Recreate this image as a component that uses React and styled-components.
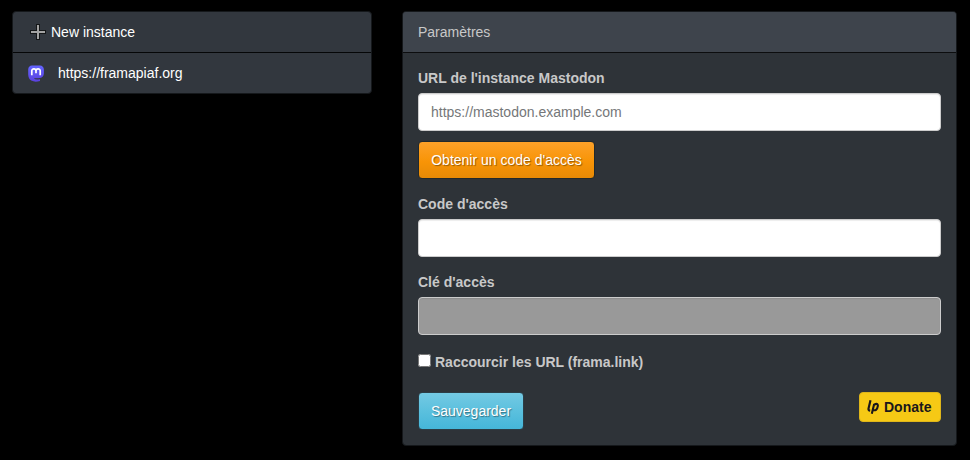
import React from "react";
import styled, { createGlobalStyle, css } from "styled-components";

const Global = createGlobalStyle`
  *, *::before, *::after { box-sizing: border-box; }
  body {
    margin: 0;
    background: #000;
    color: #c8c8c8;
    font: 14px/20px "Liberation Sans", Arial, sans-serif;
  }
`;

const Page = styled.main`
  display: grid;
  grid-template-columns: 360px 555px;
  column-gap: 30px;
  align-items: start;
  height: 460px;
  padding: 11px 13px 0 12px;
  overflow: hidden;
`;

const InstanceList = styled.ul`
  margin: 0;
  padding: 0;
  list-style: none;
  border: 1px solid #15181b;
  border-radius: 4px;
  background: #32373e;
  overflow: hidden;
`;

const InstanceItem = styled.li`
  display: flex;
  align-items: center;
  gap: ${(p) => p.$gap}px;
  height: 40px;
  padding-left: ${(p) => p.$indent}px;
  color: #fff;

  & + & {
    height: 41px;
    border-top: 1px solid #050607;
  }

  svg { flex: none; }
`;

const Panel = styled.section`
  height: 435px;
  border: 1px solid #15181b;
  border-radius: 4px;
  background: #2e3338;
  overflow: hidden;
`;

const PanelHeading = styled.header`
  height: 41px;
  padding: 10px 15px;
  border-bottom: 1px solid #0c0d0e;
  background: #3e444c;
`;

const Form = styled.form`
  padding: 15px 15px 0;
`;

const Field = styled.div`
  margin-bottom: 15px;
`;

const Label = styled.label`
  display: block;
  margin-bottom: 5px;
  font-weight: bold;
`;

const Input = styled.input`
  display: block;
  width: 100%;
  height: 38px;
  padding: 8px 12px;
  border: 1px solid #ccc;
  border-radius: 4px;
  background: #fff;
  color: #272b30;
  font: inherit;
  box-shadow: inset 0 1px 1px rgba(0, 0, 0, 0.075);

  &::placeholder { color: #757779; opacity: 1; }
  &:disabled { background: #999; }
`;

const variants = {
  warning: css`
    background: linear-gradient(#fda129, #f89406 55%, #e78a06);
    border-color: #22292b;
  `,
  info: css`
    background: linear-gradient(#74cae3, #5bc0de 50%, #45b6d9);
    border-color: #2c3d45;
  `,
};

const Button = styled.button`
  display: block;
  width: ${(p) => p.$width}px;
  height: 38px;
  margin-top: ${(p) => p.$top || 0}px;
  padding: 0;
  border: 1px solid;
  border-radius: 4px;
  color: #fff;
  font: inherit;
  text-shadow: 1px 1px 1px rgba(0, 0, 0, 0.4);
  ${(p) => variants[p.$variant]}
`;

const CheckLabel = styled.label`
  display: flex;
  align-items: center;
  gap: 4px;
  height: 20px;
  margin-top: 17px;
  font-weight: bold;
`;

const Checkbox = styled.input`
  width: 13px;
  height: 13px;
  margin: 0 0 3px;
`;

const Actions = styled.div`
  display: flex;
  justify-content: space-between;
  align-items: flex-start;
  margin-top: 20px;
`;

const Donate = styled.button`
  display: flex;
  align-items: center;
  gap: 5px;
  width: 82px;
  height: 30px;
  padding: 0 0 0 7px;
  border: 1px solid #dfb61a;
  border-radius: 4px;
  background: #f6c915;
  color: #1a171b;
  font: bold 14px/20px "Liberation Sans", Arial, sans-serif;
`;

const PlusIcon = () => (
  <svg width="16" height="16" viewBox="0 0 16 16">
    <path d="M6 0h4v6h6v4h-6v6H6v-6H0V6h6z" fill="#141617" />
    <path d="M7 1h2v6h6v2H9v6H7V9H1V7h6z" fill="#a3a3a3" />
  </svg>
);

const MastodonIcon = () => (
  <svg width="16" height="17" viewBox="0 0 16 17">
    <defs>
      <linearGradient id="mastodon" x1="0" y1="0" x2="0" y2="1">
        <stop offset="0" stopColor="#6364ff" />
        <stop offset="1" stopColor="#5b41df" />
      </linearGradient>
    </defs>
    <path
      d="M4 .5h8Q15.600.8 15.900 4.500v4Q15.600 12.300 12 12.900q-3 .6-6 .1.6 1.800 4 1.600l2-.3v1.600q-4.800 1.700-8.800-.3Q.4 13.800.2 9.500v-5Q.4.800 4 .5z"
      fill="url(#mastodon)"
    />
    <path
      d="M3.800 10.200V5.800C3.800 3.100 8 3.100 8 5.900c0-2.800 4.200-2.800 4.200-.1v4.400M8 5.700v2.600"
      fill="none"
      stroke="#fff"
      strokeWidth="1.700"
    />
  </svg>
);

const LiberapayIcon = () => (
  <svg width="12" height="16" viewBox="0 0 12 16" fill="none" stroke="#1a171b">
    <path d="M3.500 1.200 1.500 9.600Q1.200 11.300 3.200 11.600" strokeWidth="2.200" />
    <path
      d="M4.800 14.800 7 5.700Q11.300 3.500 10.800 7.200C10.400 10.700 8.200 12 5.800 10.800"
      strokeWidth="2.100"
    />
  </svg>
);

export default function App() {
  return (
    <>
      <Global />
      <Page>
        <InstanceList>
          <InstanceItem $indent={17} $gap={5}>
            <PlusIcon />
            New instance
          </InstanceItem>
          <InstanceItem $indent={15} $gap={14}>
            <MastodonIcon />
            https://framapiaf.org
          </InstanceItem>
        </InstanceList>

        <Panel>
          <PanelHeading>Paramètres</PanelHeading>
          <Form onSubmit={(e) => e.preventDefault()}>
            <Field>
              <Label htmlFor="url">URL de l'instance Mastodon</Label>
              <Input id="url" placeholder="https://mastodon.example.com" />
              <Button type="button" $variant="warning" $width={177} $top={10}>
                Obtenir un code d'accès
              </Button>
            </Field>
            <Field>
              <Label htmlFor="code">Code d'accès</Label>
              <Input id="code" />
            </Field>
            <Field>
              <Label htmlFor="key">Clé d'accès</Label>
              <Input id="key" disabled />
            </Field>
            <CheckLabel>
              <Checkbox type="checkbox" />
              Raccourcir les URL (frama.link)
            </CheckLabel>
            <Actions>
              <Button type="submit" $variant="info" $width={106}>
                Sauvegarder
              </Button>
              <Donate type="button">
                <LiberapayIcon />
                Donate
              </Donate>
            </Actions>
          </Form>
        </Panel>
      </Page>
    </>
  );
}
